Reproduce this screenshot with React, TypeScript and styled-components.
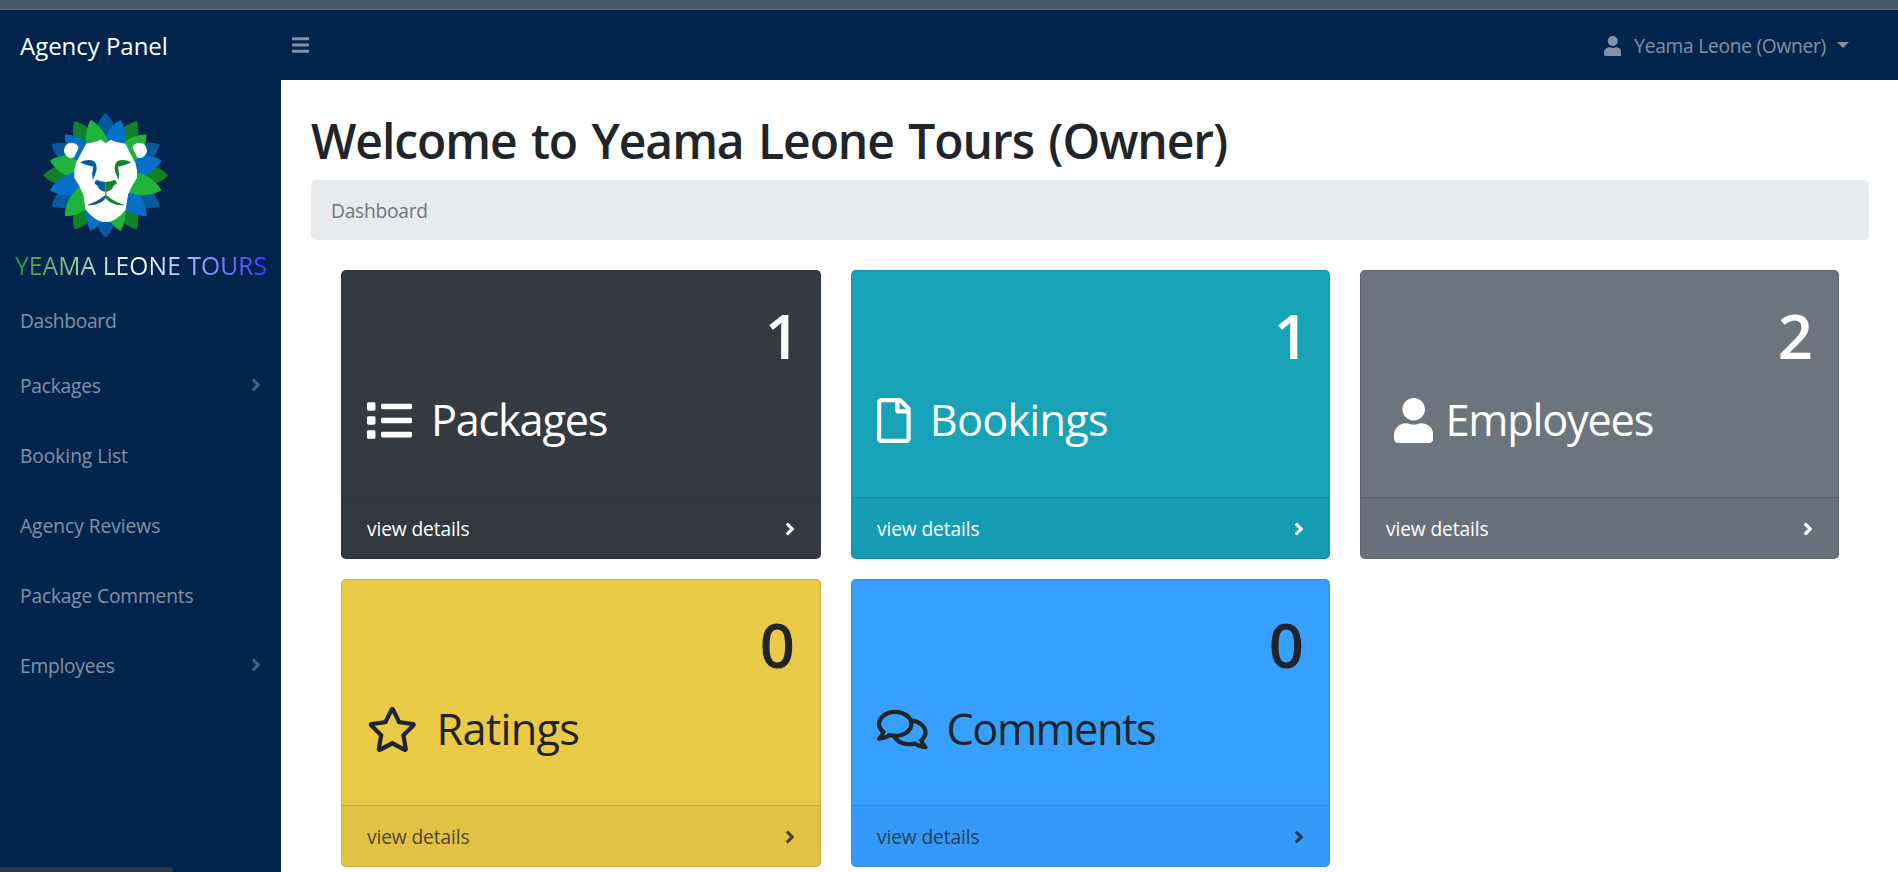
import React from 'react';
import styled, { createGlobalStyle } from 'styled-components';
import { FaAngleRight, FaBars, FaList, FaRegComments, FaRegFile, FaRegStar, FaUser } from 'react-icons/fa';

const GlobalStyle = createGlobalStyle`
  *, *::before, *::after { box-sizing: border-box; }
  body {
    margin: 0;
    background: #fff;
    color: #212529;
    font-family: 'Segoe UI', 'Open Sans', 'Noto Sans', sans-serif;
    font-size: 19.2px;
    line-height: 30px;
    overflow: hidden;
  }
  svg { display: block; flex: none; }
`;

const Page = styled.div`
  display: flex;
  flex-direction: column;
  height: 872px;
  overflow: hidden;
`;

const WindowEdge = styled.div`
  flex: none;
  height: 10px;
  background: #475962;
  border-bottom: 1px solid #5b7684;
`;

const Shell = styled.div`
  display: grid;
  grid-template-columns: 281px 1fr;
  flex: 1;
  min-height: 0;
`;

const Sidebar = styled.nav`
  background: #03244d;
  color: rgba(255, 255, 255, 0.5);
`;

const Brand = styled.div`
  display: flex;
  align-items: center;
  height: 70px;
  padding: 2px 0 0 20px;
  color: #fff;
  font-size: 24px;
  letter-spacing: -0.03px;
`;

const Logo = styled.svg`
  width: 132px;
  height: 132px;
  margin: 28px 0 10px 40px;
`;

const AgencyName = styled.div`
  height: 31px;
  margin-bottom: 9px;
  padding-left: 15px;
  font-size: 24.6px;
  line-height: 31px;
  letter-spacing: 0.1px;
  white-space: nowrap;
  color: transparent;
  background: linear-gradient(to right, #118822, #fff 50%, #2222ff);
  background-clip: text;
  -webkit-background-clip: text;
`;

const NavItem = styled.a<{ $height?: number; $spacing?: number }>`
  display: flex;
  align-items: center;
  justify-content: space-between;
  height: ${(p) => p.$height ?? 70}px;
  padding: 1px 20px 0;
  letter-spacing: ${(p) => p.$spacing ?? -0.1}px;

  svg { color: rgba(255, 255, 255, 0.27); margin-top: -1px; }
`;

const Main = styled.div`
  display: flex;
  flex-direction: column;
  min-width: 0;
`;

const TopBar = styled.header`
  display: flex;
  align-items: center;
  justify-content: space-between;
  flex: none;
  height: 70px;
  padding: 0 49px 0 10.5px;
  background: #03244d;
  color: rgba(255, 255, 255, 0.5);
`;

const UserMenu = styled.div`
  display: flex;
  align-items: center;
  padding-top: 1px;
  letter-spacing: -0.27px;

  svg { margin-right: 13px; }
`;

const Caret = styled.span`
  width: 0;
  height: 0;
  margin: -2px 0 0 11px;
  border: 6px solid transparent;
  border-top-color: currentColor;
  border-bottom: 0;
`;

const Content = styled.main`
  padding: 31px 29px 0 30px;
`;

const Heading = styled.h1`
  margin: 0 0 9px;
  font-size: 48px;
  font-weight: 600;
  line-height: 60px;
  letter-spacing: -1.07px;
  word-spacing: 3px;
  white-space: nowrap;
`;

const Breadcrumb = styled.div`
  display: flex;
  align-items: center;
  height: 60px;
  padding: 1px 20px 0;
  border-radius: 5px;
  background: #e7ebee;
  color: #6c757d;
  letter-spacing: -0.25px;
`;

const Cards = styled.div`
  display: grid;
  grid-template-columns: 480px 1fr 1fr;
  grid-template-rows: 289px 288px;
  gap: 20px 30px;
  padding: 30px;
`;

const Card = styled.section<{ $bg: string; $light?: boolean }>`
  display: flex;
  flex-direction: column;
  border: 1px solid rgba(0, 0, 0, 0.125);
  border-radius: 5px;
  background: ${(p) => p.$bg};
  color: ${(p) => (p.$light ? '#fff' : '#212529')};
`;

const CardBody = styled.div`
  flex: 1;
  padding: 30px 25px 0;
`;

const Count = styled.div<{ $nudge?: number }>`
  height: 68px;
  margin-right: ${(p) => p.$nudge ?? 0}px;
  font-size: 61.5px;
  font-weight: 600;
  line-height: 68px;
  text-align: right;
`;

const CardTitle = styled.div<{ $indent?: number; $gap?: number; $spacing: number }>`
  display: flex;
  align-items: center;
  gap: ${(p) => p.$gap ?? 19}px;
  height: 54px;
  margin-top: 24px;
  padding-left: ${(p) => p.$indent ?? 0}px;
  font-size: 43.3px;
  line-height: 54px;
  letter-spacing: ${(p) => p.$spacing}px;
`;

const CardFooter = styled.div<{ $light?: boolean }>`
  display: flex;
  align-items: center;
  justify-content: space-between;
  height: 61px;
  padding: 1px 25px 0;
  border-top: 1px solid rgba(0, 0, 0, 0.125);
  background: rgba(0, 0, 0, 0.03);
  color: ${(p) => (p.$light ? '#fff' : 'rgba(33, 37, 41, 0.8)')};
  letter-spacing: -0.12px;
`;

const IconBox = styled.span<{ $width: number; $height?: number }>`
  svg {
    width: ${(p) => p.$width}px;
    height: ${(p) => p.$height ?? 20}px;
  }
`;

const StatusBubble = styled.div`
  position: absolute;
  left: 0;
  bottom: 0;
  width: 173px;
  height: 5px;
  border-top-right-radius: 4px;
  background: #30383f;
`;

const LEAF = 'M0 -173C17 -157 37 -124 31 -78L0 -20L-31 -78C-37 -124 -17 -157 0 -173Z';
const BACK_LEAF = 'M0 -187C17 -172 34 -144 32 -100L0 -20L-32 -100C-34 -144 -17 -172 0 -187Z';
const GREEN = '#20b33b';
const BLUE = '#0570c8';
const DEEP_GREEN = '#128229';
const DEEP_BLUE = '#065b9f';

const backLeaves: [number, string][] = [
  [0, DEEP_BLUE], [30, DEEP_GREEN], [60, DEEP_BLUE], [90, DEEP_GREEN], [120, DEEP_BLUE], [150, DEEP_GREEN],
  [180, DEEP_BLUE], [210, DEEP_GREEN], [240, DEEP_BLUE], [270, DEEP_GREEN], [300, DEEP_BLUE], [330, DEEP_GREEN],
];
const frontLeaves: [number, string][] = [
  [315, BLUE], [285, GREEN], [255, BLUE], [195, BLUE], [225, GREEN], [165, GREEN],
  [135, BLUE], [45, GREEN], [75, BLUE], [105, GREEN], [15, BLUE], [345, GREEN],
];

function LionLogo() {
  return (
    <Logo viewBox="0 0 396 396">
      <g transform="translate(197 202)">
        {backLeaves.map(([a, c]) => <path key={a} d={BACK_LEAF} fill={c} transform={`rotate(${a})`} />)}
        {frontLeaves.map(([a, c]) => <path key={a} d={LEAF} fill={c} transform={`rotate(${a})`} />)}
      </g>
      <circle cx="95" cy="127" r="23" fill="#fff" />
      <circle cx="298" cy="127" r="23" fill="#fff" />
      <path d="M123 106L144 104L116 157L100 152Z" fill={BLUE} />
      <path d="M271 106L250 104L278 157L294 152Z" fill={GREEN} />
      <path
        d="M197 106L182 95L168 101L138 107L121 140L108 164L103 186V210L118 234L130 260L137 305Q148 320 166 332Q180 342 197 342Q214 342 228 332Q246 320 257 305L264 260L276 234L291 210V186L286 164L273 140L256 107L226 101L212 95Z"
        fill="#fff"
      />
      <path d="M120 163Q143 151 161 159Q173 168 169 190L158 217Q154 196 160 176Q140 174 120 163Z" fill={DEEP_BLUE} />
      <path d="M274 163Q251 151 233 159Q221 168 225 190L236 217Q240 196 234 176Q254 174 274 163Z" fill={DEEP_GREEN} />
      <path d="M197 221Q183 223 173 216Q164 217 164 227L173 233Q177 247 195 251V262Q172 282 141 291Q178 295 197 271Z" fill={DEEP_BLUE} />
      <path d="M197 221Q211 223 221 216Q230 217 230 227L221 233Q217 247 199 251V262Q222 282 253 291Q216 295 197 271Z" fill={DEEP_GREEN} />
    </Logo>
  );
}

type CardData = {
  title: string;
  count: number;
  bg: string;
  light?: boolean;
  icon: React.ReactNode;
  iconWidth: number;
  spacing: number;
  indent?: number;
  gap?: number;
  nudge?: number;
};

const cards: CardData[] = [
  { title: 'Packages', count: 1, bg: '#343a40', light: true, icon: <FaList />, iconWidth: 45, spacing: -1.25, nudge: -5 },
  { title: 'Bookings', count: 1, bg: '#17a2b8', light: true, icon: <FaRegFile />, iconWidth: 33.75, spacing: -0.8, nudge: -5 },
  { title: 'Employees', count: 2, bg: '#6c757d', light: true, icon: <FaUser />, iconWidth: 39.4, spacing: -1.2, indent: 8, gap: 12 },
  { title: 'Ratings', count: 0, bg: '#eac946', icon: <FaRegStar />, iconWidth: 50.6, spacing: -0.75 },
  { title: 'Comments', count: 0, bg: '#379fff', icon: <FaRegComments />, iconWidth: 50.6, spacing: -1.5 },
];

export default function App() {
  return (
    <Page>
      <GlobalStyle />
      <WindowEdge />
      <Shell>
        <Sidebar>
          <Brand>Agency Panel</Brand>
          <LionLogo />
          <AgencyName>YEAMA LEONE TOURS</AgencyName>
          <NavItem $height={60} $spacing={-0.3}>Dashboard</NavItem>
          <NavItem $spacing={-0.22}>Packages <IconBox $width={10}><FaAngleRight /></IconBox></NavItem>
          <NavItem $spacing={-0.05}>Booking List</NavItem>
          <NavItem $spacing={-0.03}>Agency Reviews</NavItem>
          <NavItem $spacing={-0.16}>Package Comments</NavItem>
          <NavItem $spacing={-0.25}>Employees <IconBox $width={10}><FaAngleRight /></IconBox></NavItem>
        </Sidebar>
        <Main>
          <TopBar>
            <IconBox $width={17.5}><FaBars /></IconBox>
            <UserMenu>
              <IconBox $width={17.5}><FaUser /></IconBox>
              Yeama Leone (Owner)
              <Caret />
            </UserMenu>
          </TopBar>
          <Content>
            <Heading>Welcome to Yeama Leone Tours (Owner)</Heading>
            <Breadcrumb>Dashboard</Breadcrumb>
            <Cards>
              {cards.map((c) => (
                <Card key={c.title} $bg={c.bg} $light={c.light}>
                  <CardBody>
                    <Count $nudge={c.nudge}>{c.count}</Count>
                    <CardTitle $spacing={c.spacing} $indent={c.indent} $gap={c.gap}>
                      <IconBox $width={c.iconWidth} $height={45}>{c.icon}</IconBox>
                      {c.title}
                    </CardTitle>
                  </CardBody>
                  <CardFooter $light={c.light}>
                    view details
                    <IconBox $width={10}><FaAngleRight /></IconBox>
                  </CardFooter>
                </Card>
              ))}
            </Cards>
          </Content>
        </Main>
      </Shell>
      <StatusBubble />
    </Page>
  );
}
